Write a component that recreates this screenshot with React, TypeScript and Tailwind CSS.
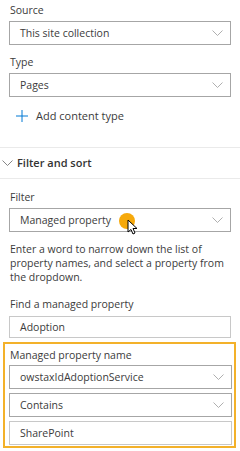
import React from "react";

function Chevron({ className = "" }: { className?: string }) {
  return (
    <svg width="11" height="6" viewBox="0 0 11 6" className={className} fill="none">
      <path d="M0.5 0.5 L5.5 5.5 L10.5 0.5" stroke="currentColor" strokeWidth="0.9" />
    </svg>
  );
}

function Dropdown({ value, children }: { value: string; children?: React.ReactNode }) {
  return (
    <div className="relative flex h-[24px] w-full items-center justify-between border border-[#a6a6a6] bg-white pl-[10px] pr-[7px]">
      <span className="text-[10.5px] leading-none text-[#3b3b3b]">{value}</span>
      <Chevron className="text-[#a6a6a6]" />
      {children}
    </div>
  );
}

function TextInput({ value, height = "h-[24px]" }: { value: string; height?: string }) {
  return (
    <div className={`flex w-full items-center border border-[#c8c8c8] bg-white pl-[10px] ${height}`}>
      <span className="text-[10.5px] leading-none text-[#3b3b3b]">{value}</span>
    </div>
  );
}

function Label({ children }: { children: React.ReactNode }) {
  return <div className="pl-[1px] text-[10.5px] leading-[16px] text-[#3b3b3b]">{children}</div>;
}

export default function App() {
  return (
    <div
      className="h-[451px] w-[240px] overflow-hidden bg-white"
      style={{ fontFamily: '"Open Sans", "Noto Sans", sans-serif' }}
    >
      {/* Source / Type */}
      <div className="px-[9px] pt-[2px]">
        <Label>Source</Label>
        <div className="mt-[3px]">
          <Dropdown value="This site collection" />
        </div>
        <div className="mt-[9px]">
          <Label>Type</Label>
        </div>
        <div className="mt-[3px]">
          <Dropdown value="Pages" />
        </div>
        <div className="mt-[11px] flex h-[16px] items-center gap-[8px] pl-[7px]">
          <svg width="12" height="12" viewBox="0 0 12 12" fill="none">
            <path d="M6 0 V12 M0 6 H12" stroke="#0078d4" strokeWidth="1" />
          </svg>
          <span className="text-[11px] text-[#3b3b3b]">Add content type</span>
        </div>
      </div>

      <div className="mt-[23px] h-px w-full bg-[#eaeaea]" />

      {/* Filter and sort header */}
      <div className="flex h-[30px] items-center gap-[4px] pl-[2px]">
        <Chevron className="text-[#777777]" />
        <span className="text-[11px] font-semibold text-[#333333]">Filter and sort</span>
      </div>
      <div className="h-px w-full bg-[#eaeaea]" />

      <div className="px-[9px] pt-[10px]">
        <Label>Filter</Label>
        <div className="mt-[3px]">
          <Dropdown value="Managed property">
            <div className="absolute left-[109px] top-[4px] h-[16px] w-[16px] rounded-full bg-[#f6a90b]" />
            <svg
              className="absolute left-[117px] top-[10px]"
              width="11"
              height="16"
              viewBox="0 0 11 16"
            >
              <path
                d="M1 1 L1 13 L4 10.5 L6 15 L8 14 L6 9.5 L10 9.5 Z"
                fill="white"
                stroke="black"
                strokeWidth="1"
                strokeLinejoin="round"
              />
            </svg>
          </Dropdown>
        </div>
        <p className="mt-[10px] whitespace-nowrap pl-[1px] text-[10.5px] leading-[14px] text-[#3b3b3b]">
          Enter a word to narrow down the list of
          <br />
          property names, and select a property from
          <br />
          the dropdown.
        </p>
        <div className="mt-[12px]">
          <Label>Find a managed property</Label>
        </div>
        <div className="mt-[4px]">
          <TextInput value="Adoption" height="h-[22px]" />
        </div>
      </div>

      {/* Highlighted group */}
      <div className="ml-[3px] mt-[4px] w-[233px] border-2 border-[#f3b12a] pb-[1px] pl-[4px] pr-[2px] pt-[3px]">
        <Label>Managed property name</Label>
        <div className="mt-[2px]">
          <Dropdown value="owstaxIdAdoptionService" />
        </div>
        <div className="mt-[4px]">
          <Dropdown value="Contains" />
        </div>
        <div className="mt-[4px]">
          <TextInput value="SharePoint" />
        </div>
      </div>
    </div>
  );
}
